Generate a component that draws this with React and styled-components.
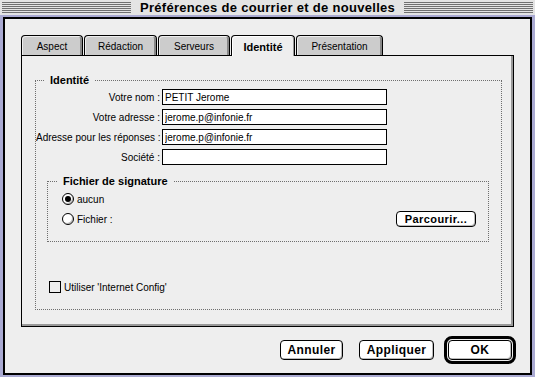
import React from 'react';
import styled, { createGlobalStyle } from 'styled-components';

const GlobalStyle = createGlobalStyle`
  html, body { margin: 0; padding: 0; background: #aaaad2; }
  body { font-family: "Liberation Sans", Arial, sans-serif; font-size: 10px; color: #000; }
  * { box-sizing: border-box; }
`;

const Window = styled.div`
  width: 535px;
  height: 377px;
  background: #aaaad2;
  display: flex;
  flex-direction: column;
  overflow: hidden;
`;

const TitleBar = styled.div`
  height: 15px;
  flex: none;
  background: #e4e4e4;
  display: flex;
  align-items: center;
  padding: 0 2px;
`;

const Stripes = styled.div`
  flex: 1;
  height: 12px;
  background: repeating-linear-gradient(to bottom, #707070 0 1px, #e4e4e4 1px 2px);
`;

const Title = styled.div`
  padding: 0 9px;
  font-weight: bold;
  font-size: 13px;
  letter-spacing: 0.3px;
  line-height: 15px;
  white-space: nowrap;
`;

const Body = styled.div`
  flex: 1;
  margin: 2px 3px 2px 3px;
  border: 2px solid #000;
  background: #eeeeee;
  padding: 16px 14px 0 16px;
  display: flex;
  flex-direction: column;
`;

const TabRow = styled.div`
  display: flex;
  gap: 1px;
  height: 20px;
  align-items: flex-end;
  position: relative;
  z-index: 1;
`;

const Tab = styled.div`
  width: ${p => p.w}px;
  height: ${p => (p.active ? 21 : 20)}px;
  margin-bottom: ${p => (p.active ? -1 : 0)}px;
  border: 1px solid #000;
  border-bottom: none;
  border-radius: 4px 4px 0 0;
  background: ${p => (p.active ? '#eeeeee' : '#cccccc')};
  box-shadow: ${p => (p.active ? 'inset 1px 1px 0 #fff, inset -1px 0 0 #999' : 'inset 1px 1px 0 #eee, inset -2px 0 0 #888')};
  display: flex;
  align-items: center;
  justify-content: center;
  font-size: ${p => (p.active ? 11 : 10)}px;
  font-weight: ${p => (p.active ? 'bold' : 'normal')};
  padding-top: 1px;
`;

const Panel = styled.div`
  width: 493px;
  height: 272px;
  border: 1px solid #000;
  box-shadow: inset -2px -2px 0 #999;
  background: #eeeeee;
  padding: 24px 11px 16px 13px;
  display: flex;
`;

const Group = styled.div`
  position: relative;
  flex: ${p => (p.grow ? 1 : 'none')};
  border: 1px dotted #6e6e6e;
  display: flex;
  flex-direction: column;
  padding: ${p => p.pad};
  margin: ${p => p.margin || 0};
`;

const Legend = styled.div`
  position: absolute;
  top: -7px;
  left: ${p => p.left}px;
  padding: 0 ${p => p.padX}px;
  background: #eeeeee;
  font-weight: bold;
  font-size: 11px;
  line-height: 12px;
`;

const Form = styled.div`
  display: grid;
  grid-template-columns: 124px 225px;
  column-gap: 2px;
  row-gap: 4px;
  align-items: center;
`;

const Label = styled.label`
  text-align: right;
  white-space: nowrap;
  font-size: 10px;
`;

const Field = styled.input`
  height: 16px;
  width: 225px;
  border: 1px solid #000;
  background: #fff;
  padding: 0 2px;
  font-family: "Liberation Sans", Arial, sans-serif;
  font-size: 10px;
  color: #000;
  outline: none;
`;

const OptionRow = styled.div`
  display: flex;
  align-items: center;
  height: 16px;
  gap: 3px;
  margin-top: ${p => p.top || 0}px;
  margin-left: ${p => p.left || 0}px;
`;

const Radio = styled.span`
  width: 12px;
  height: 12px;
  border: 1px solid #000;
  border-radius: 50%;
  background: #fff;
  box-shadow: inset -1px -1px 0 #bbb;
  display: flex;
  align-items: center;
  justify-content: center;
  &::after {
    content: '';
    width: 6px;
    height: 6px;
    border-radius: 50%;
    background: ${p => (p.checked ? '#000' : 'transparent')};
  }
`;

const Checkbox = styled.span`
  width: 12px;
  height: 12px;
  border: 1px solid #000;
  background: #eeeeee;
`;

const Spacer = styled.div`
  flex: 1;
`;

const Button = styled.button`
  width: ${p => p.w}px;
  height: ${p => p.h || 20}px;
  border: 1px solid #000;
  border-radius: 4px;
  background: #fff;
  box-shadow: inset -1px -1px 0 #bbb;
  font-family: "Liberation Sans", Arial, sans-serif;
  font-weight: bold;
  font-size: ${p => p.fs || 12}px;
  letter-spacing: 0.4px;
  padding: 0;
  color: #000;
`;

const DefaultRing = styled.div`
  border: 3px solid #000;
  border-radius: 8px;
  padding: 1px;
  display: flex;
`;

const ButtonRow = styled.div`
  display: flex;
  justify-content: flex-end;
  align-items: center;
  margin-top: 9px;
  gap: 16px;
`;

const tabs = [
  { label: 'Aspect', w: 62 },
  { label: 'Rédaction', w: 73 },
  { label: 'Serveurs', w: 72 },
  { label: 'Identité', w: 64, active: true },
  { label: 'Présentation', w: 87 },
];

const fields = [
  { label: 'Votre nom :', value: 'PETIT Jerome' },
  { label: 'Votre adresse :', value: 'jerome.p@infonie.fr' },
  { label: 'Adresse pour les réponses :', value: 'jerome.p@infonie.fr' },
  { label: 'Société :', value: '' },
];

export default function App() {
  return (
    <>
      <GlobalStyle />
      <Window>
        <TitleBar>
          <Stripes />
          <Title>Préférences de courrier et de nouvelles</Title>
          <Stripes />
        </TitleBar>
        <Body>
          <TabRow>
            {tabs.map(t => (
              <Tab key={t.label} w={t.w} active={t.active}>{t.label}</Tab>
            ))}
          </TabRow>
          <Panel>
            <Group grow pad="8px 0 14px 0">
              <Legend left={8} padX={6}>Identité</Legend>
              <Form>
                {fields.map(f => (
                  <React.Fragment key={f.label}>
                    <Label>{f.label}</Label>
                    <Field defaultValue={f.value} />
                  </React.Fragment>
                ))}
              </Form>
              <Group pad="9px 12px 14px 14px" margin="16px 12px 0 11px">
                <Legend left={10} padX={5}>Fichier de signature</Legend>
                <OptionRow>
                  <Radio checked />
                  <span>aucun</span>
                </OptionRow>
                <OptionRow top={4}>
                  <Radio />
                  <span>Fichier :</span>
                  <Spacer />
                  <Button w={80} h={16} fs={11}>Parcourir...</Button>
                </OptionRow>
              </Group>
              <Spacer />
              <OptionRow left={13}>
                <Checkbox />
                <span>Utiliser 'Internet Config'</span>
              </OptionRow>
            </Group>
          </Panel>
          <ButtonRow>
            <Button w={63}>Annuler</Button>
            <Button w={75} style={{ marginRight: -6 }}>Appliquer</Button>
            <DefaultRing>
              <Button w={64}>OK</Button>
            </DefaultRing>
          </ButtonRow>
        </Body>
      </Window>
    </>
  );
}
